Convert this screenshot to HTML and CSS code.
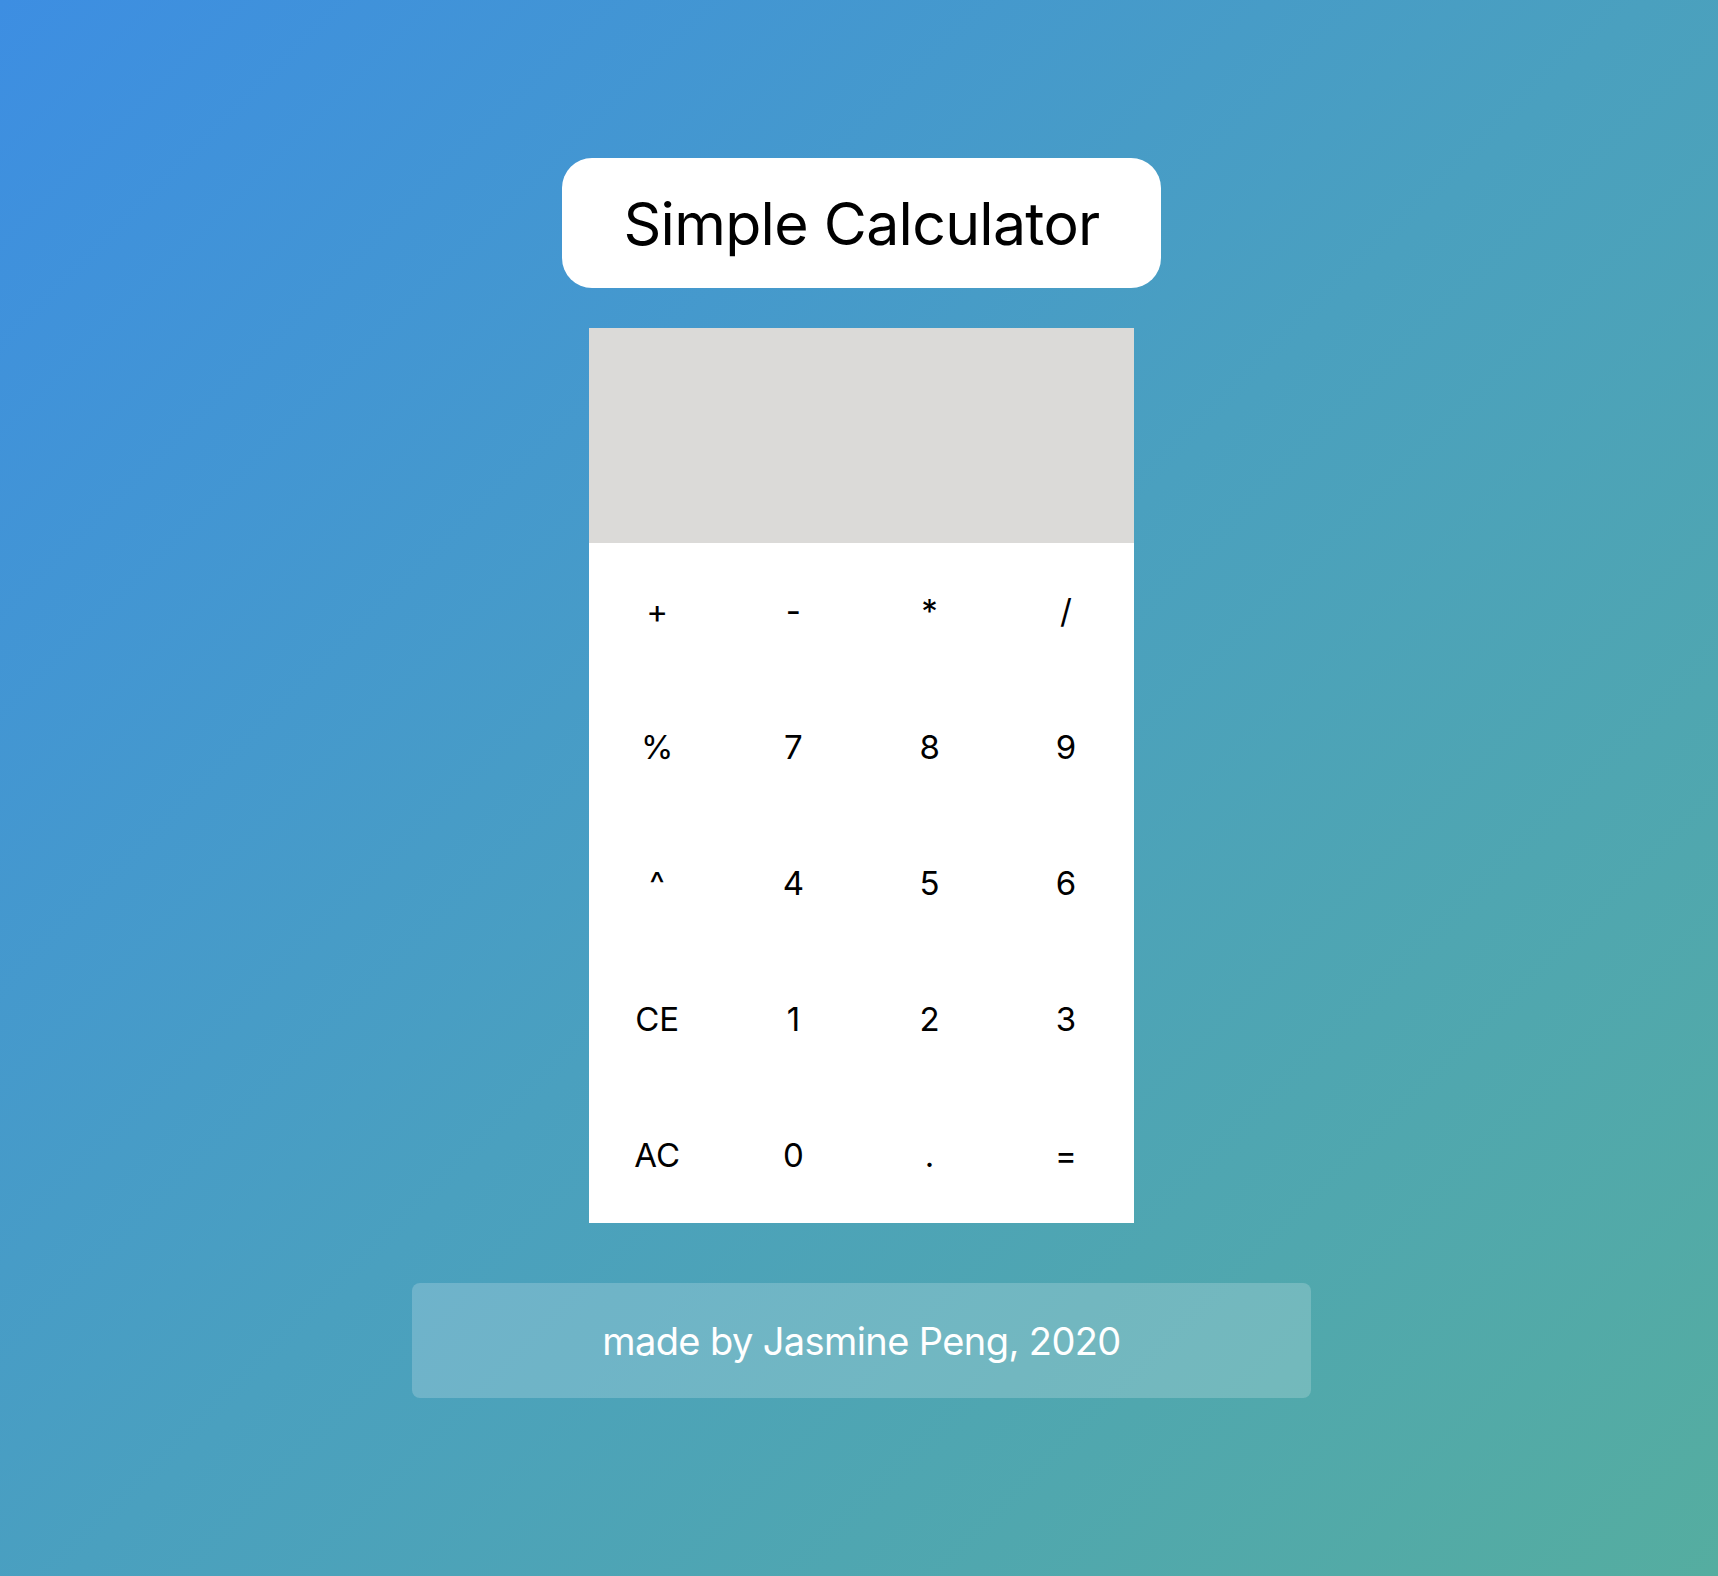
FILE: index.html
```html
<!DOCTYPE html>
<html lang="en">
<head>
<meta charset="utf-8">
<title>Simple Calculator</title>
<link rel="stylesheet" href="styles.css">
</head>
<body>
<main class="page">
  <h1 class="title">Simple Calculator</h1>
  <section class="calculator">
    <div class="display"></div>
    <div class="keys">
      <button class="key">+</button>
      <button class="key">-</button>
      <button class="key">*</button>
      <button class="key">/</button>
      <button class="key">%</button>
      <button class="key">7</button>
      <button class="key">8</button>
      <button class="key">9</button>
      <button class="key">^</button>
      <button class="key">4</button>
      <button class="key">5</button>
      <button class="key">6</button>
      <button class="key">CE</button>
      <button class="key">1</button>
      <button class="key">2</button>
      <button class="key">3</button>
      <button class="key">AC</button>
      <button class="key">0</button>
      <button class="key">.</button>
      <button class="key">=</button>
    </div>
  </section>
  <footer class="credit">made by Jasmine Peng, 2020</footer>
</main>
</body>
</html>
```
FILE: styles.css
```css
* { box-sizing: border-box; }
html, body { margin: 0; padding: 0; }
body {
  min-height: 100vh;
  font-family: Inter, "Noto Sans", sans-serif;
  background: linear-gradient(135deg, #3d8ee2 0%, #4aa0bf 50%, #55ada0 100%);
}
.page {
  display: flex;
  flex-direction: column;
  align-items: center;
  padding-top: 158px;
  padding-left: 5px;
  min-height: 1576px;
}
.title {
  margin: 0;
  width: 599px;
  height: 130px;
  background: #fff;
  border-radius: 30px;
  display: flex;
  align-items: center;
  justify-content: center;
  font-size: 59px;
  font-weight: 400;
  color: #000;
  letter-spacing: -0.7px;
}
.calculator {
  margin-top: 40px;
  width: 545px;
  background: #fff;
}
.display {
  height: 215px;
  background: #dbdad8;
}
.keys {
  display: grid;
  grid-template-columns: repeat(4, 1fr);
  grid-auto-rows: 136px;
}
.key {
  border: none;
  background: transparent;
  font-family: inherit;
  font-size: 33px;
  color: #000;
  padding: 0;
  cursor: pointer;
}
.credit {
  margin-top: 60px;
  width: 899px;
  height: 115px;
  border-radius: 8px;
  background: rgba(255, 255, 255, 0.2);
  color: #fff;
  font-size: 38px;
  display: flex;
  align-items: center;
  justify-content: center;
  letter-spacing: -0.6px;
}
```
